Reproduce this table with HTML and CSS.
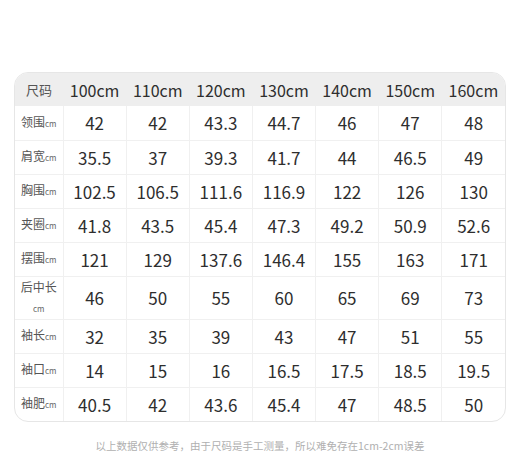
FILE: index.html
```html
<!DOCTYPE html>
<html lang="zh">
<head>
<meta charset="utf-8">
<link rel="stylesheet" href="styles.css">
</head>
<body>
<div class="page">
  <div class="card">
    <table class="size-table">
      <thead>
        <tr>
          <th class="corner">尺码</th>
          <th>100cm</th><th>110cm</th><th>120cm</th><th>130cm</th><th>140cm</th><th>150cm</th><th>160cm</th>
        </tr>
      </thead>
      <tbody>
        <tr><td class="label">领围<small>cm</small></td><td>42</td><td>42</td><td>43.3</td><td>44.7</td><td>46</td><td>47</td><td>48</td></tr>
        <tr><td class="label">肩宽<small>cm</small></td><td>35.5</td><td>37</td><td>39.3</td><td>41.7</td><td>44</td><td>46.5</td><td>49</td></tr>
        <tr><td class="label">胸围<small>cm</small></td><td>102.5</td><td>106.5</td><td>111.6</td><td>116.9</td><td>122</td><td>126</td><td>130</td></tr>
        <tr><td class="label">夹圈<small>cm</small></td><td>41.8</td><td>43.5</td><td>45.4</td><td>47.3</td><td>49.2</td><td>50.9</td><td>52.6</td></tr>
        <tr><td class="label">摆围<small>cm</small></td><td>121</td><td>129</td><td>137.6</td><td>146.4</td><td>155</td><td>163</td><td>171</td></tr>
        <tr class="tall"><td class="label">后中长<br><small>cm</small></td><td>46</td><td>50</td><td>55</td><td>60</td><td>65</td><td>69</td><td>73</td></tr>
        <tr><td class="label">袖长<small>cm</small></td><td>32</td><td>35</td><td>39</td><td>43</td><td>47</td><td>51</td><td>55</td></tr>
        <tr><td class="label">袖口<small>cm</small></td><td>14</td><td>15</td><td>16</td><td>16.5</td><td>17.5</td><td>18.5</td><td>19.5</td></tr>
        <tr><td class="label">袖肥<small>cm</small></td><td>40.5</td><td>42</td><td>43.6</td><td>45.4</td><td>47</td><td>48.5</td><td>50</td></tr>
      </tbody>
    </table>
  </div>
  <p class="note">以上数据仅供参考，由于尺码是手工测量，所以难免存在1cm-2cm误差</p>
</div>
</body>
</html>
```

FILE: styles.css
```css
* { box-sizing: border-box; }
html, body { margin: 0; padding: 0; background: #ffffff; }
body {
  font-family: "Noto Sans CJK SC", "Noto Sans", sans-serif;
  color: #333;
}
.page {
  padding: 72px 14px 0 14px;
}
.card {
  width: 492px;
  border: 1px solid #e6e6e6;
  border-radius: 14px;
  overflow: hidden;
  background: #fff;
}
.size-table {
  width: 100%;
  border-collapse: collapse;
  table-layout: fixed;
}
.size-table th,
.size-table td {
  text-align: center;
  padding: 0;
  border-left: 1px solid #f0f0f0;
  border-top: 1px solid #f0f0f0;
}
.size-table th:first-child,
.size-table td:first-child {
  border-left: none;
  width: 48px;
}
.size-table thead tr { background: #eeeeee; }
.size-table th {
  height: 33px;
  border: none;
  font-size: 16px;
  font-weight: 400;
  color: #2e2e2e;
}
.size-table th.corner {
  font-size: 13px;
  font-weight: 400;
  color: #555;
}
.size-table td {
  height: 34px;
  font-size: 17px;
  font-weight: 400;
  color: #2e2e2e;
}
.size-table tbody tr:first-child td { border-top: none; }
.size-table tr.tall td { height: 41px; }
.size-table td.label {
  font-size: 12px;
  font-weight: 400;
  color: #555;
  line-height: 20px;
}
.size-table td.label small {
  font-size: 8px;
  color: #666;
}
.note {
  margin: 17px 0 0 0;
  text-align: center;
  font-size: 10.5px;
  color: #b0b0b0;
  line-height: 13px;
}
```
